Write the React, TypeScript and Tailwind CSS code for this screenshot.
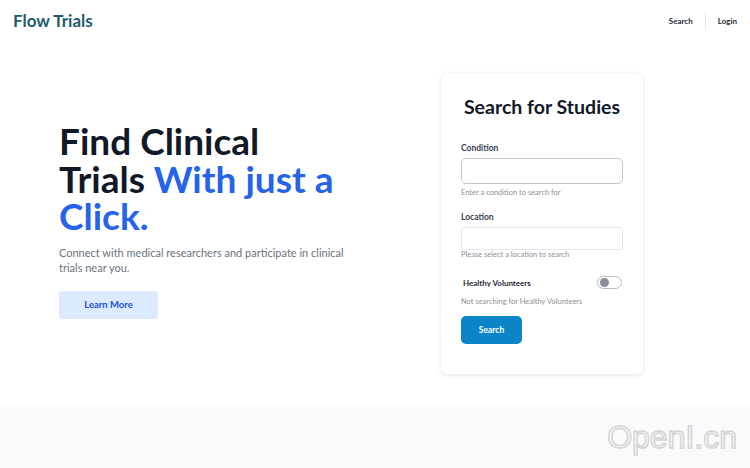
import React from "react";

export default function App() {
  return (
    <div className="w-[750px] h-[468px] bg-white overflow-hidden relative font-['Lato',sans-serif]">
      <header className="h-[42px] flex items-center justify-between pl-[13px] pr-[13px]">
        <div className="text-[17px] font-bold text-[#1e5c70]">Flow Trials</div>
        <nav className="flex items-center h-[18px] text-[8px] font-bold text-[#1f2937]">
          <span className="pr-[12px]">Search</span>
          <span className="w-px h-[18px] bg-[#e5e7eb]" />
          <span className="pl-[12px]">Login</span>
        </nav>
      </header>
      <main className="h-[363px] flex items-center">
        <div className="w-[441px] pl-[59px] pr-[60px] mb-[6px]">
          <h1 className="text-[37px] leading-[37.5px] font-bold text-[#111827]">
            Find Clinical
            <br />
            Trials <span className="text-[#2563eb]">With just a</span>
            <br />
            <span className="text-[#2563eb]">Click.</span>
          </h1>
          <p className="mt-[10px] text-[11px] leading-[15px] text-[#6b7280]">
            Connect with medical researchers and participate in clinical
            <br />
            trials near you.
          </p>
          <button className="mt-[16px] w-[99px] h-[28px] rounded-[3px] bg-[#dbeafe] text-[#1d4ed8] text-[9.5px] font-bold">
            Learn More
          </button>
        </div>
        <div className="w-[202px] h-[301px] bg-white rounded-[6px] shadow-[0_1px_4px_rgba(0,0,0,0.12)] px-[20px] pt-[22px]">
          <h2 className="text-center text-[19.5px] leading-[24px] font-bold text-[#111827]">
            Search for Studies
          </h2>
          <div className="mt-[24px] text-[8.5px] leading-[10px] font-bold text-[#374151]">Condition</div>
          <div className="mt-[5px] h-[26px] rounded-[5px] border border-[#c4c7cc]" />
          <div className="mt-[4px] text-[7.5px] leading-[10px] text-[#8b9099]">Enter a condition to search for</div>
          <div className="mt-[14px] text-[8.5px] leading-[10px] font-bold text-[#374151]">Location</div>
          <div className="mt-[5px] h-[23px] rounded-[3px] border border-[#e5e7eb]" />
          <div className="text-[7.5px] leading-[10px] text-[#8b9099]">Please select a location to search</div>
          <div className="mt-[16px] h-[13px] flex items-center justify-between pl-[2px] pr-[1px]">
            <span className="text-[8px] font-bold text-[#1f2937]">Healthy Volunteers</span>
            <span className="w-[25px] h-[13px] rounded-full border border-[#b8bcc2] bg-white flex items-center pl-[2px]">
              <span className="w-[9px] h-[9px] rounded-full bg-[#8b8f96]" />
            </span>
          </div>
          <div className="mt-[8px] text-[7.5px] leading-[10px] text-[#8b9099]">Not searching for Healthy Volunteers</div>
          <button className="mt-[9px] w-[61px] h-[28px] rounded-[5px] bg-[#0b84c8] text-white text-[8.5px] font-bold">
            Search
          </button>
        </div>
      </main>
      <div className="h-[63px] bg-[#f9fafb] flex justify-end items-center pr-[13px]">
        <span className="text-[32px] font-['Liberation_Sans',sans-serif] text-transparent [-webkit-text-stroke:1.5px_#d4d4d4]">
          OpenI.cn
        </span>
      </div>
    </div>
  );
}
